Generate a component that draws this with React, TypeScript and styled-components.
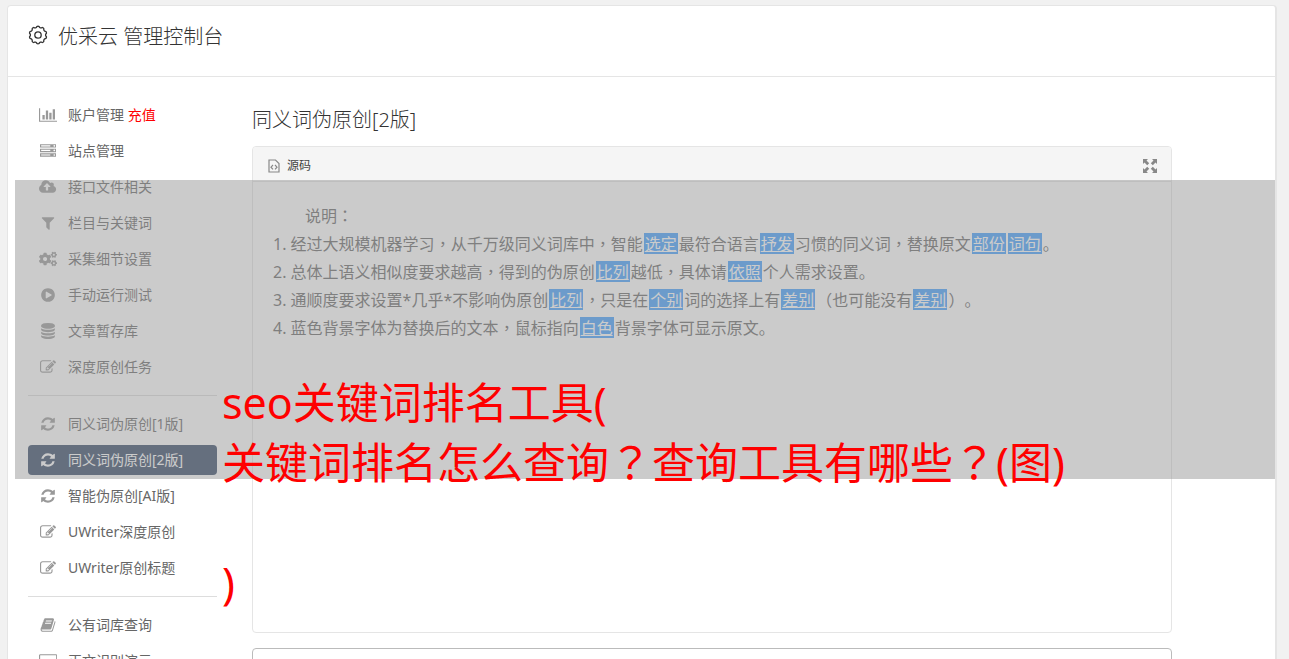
import React from "react";
import styled, { createGlobalStyle } from "styled-components";
import { FaCogs } from "react-icons/fa";

const GlobalStyle = createGlobalStyle`
  * { box-sizing: border-box; }
  html, body { margin: 0; background: #f1f1f1; }
  html { overflow: hidden; }
  body {
    font-family: "Noto Sans", "Noto Sans CJK SC", sans-serif;
    font-size: 14px;
    color: #333;
    text-spacing-trim: space-all;
  }
  h1, h2, p, ul, ol { margin: 0; padding: 0; font-weight: 400; }
  button { font: inherit; color: inherit; background: none; border: 0; padding: 0; }
`;

const Page = styled.div`
  position: relative;
  height: 100vh;
  overflow: hidden;
  padding: 5px 12px 0 7px;
`;

const Card = styled.div`
  min-height: 1000px;
  background: #fff;
  border: 1px solid #e5e5e5;
  border-right-width: 2px;
  border-radius: 4px;
`;

const Header = styled.header`
  display: flex;
  align-items: center;
  gap: 10px;
  height: 71px;
  padding: 0 20px 12px;
  border-bottom: 1px solid #e5e5e5;
`;

const SiteTitle = styled.h1`
  padding-top: 4px;
  font-size: 20px;
  font-weight: 300;
  line-height: 28px;
`;

const Body = styled.div`
  display: flex;
  gap: 35px;
  padding: 23px 20px;
`;

const Nav = styled.nav`
  flex: 0 0 189px;
`;

const NavList = styled.ul`
  display: flex;
  flex-direction: column;
  gap: 6px;
  list-style: none;
`;

const NavLink = styled.a<{ $active?: boolean }>`
  display: flex;
  align-items: center;
  height: 30px;
  padding: 0 10px;
  gap: 10px;
  border-radius: 4px;
  line-height: 20px;
  white-space: nowrap;
  text-decoration: none;
  color: ${(p) => (p.$active ? "#fff" : "#666")};
  background: ${(p) => (p.$active ? "#334765" : "transparent")};
  svg { color: ${(p) => (p.$active ? "#fff" : "#999")}; }
`;

const IconSlot = styled.span`
  display: flex;
  justify-content: center;
  flex: 0 0 20px;
`;

const Recharge = styled.span`
  color: #f00;
`;

const Divider = styled.li`
  height: 1px;
  margin: 7px 0;
  background: #ddd;
`;

const Main = styled.main`
  flex: 0 1 920px;
  min-width: 0;
`;

const PageTitle = styled.h2`
  font-size: 20px;
  font-weight: 300;
  line-height: 28px;
  padding-top: 6px;
  margin-bottom: 12px;
`;

const Editor = styled.section`
  min-height: 487px;
  border: 1px solid #e5e5e5;
  border-radius: 4px;
`;

const Toolbar = styled.div`
  display: flex;
  align-items: center;
  justify-content: space-between;
  height: 35px;
  padding: 3px 14px 0 15px;
  background: #f5f5f5;
  border-bottom: 1px solid #e5e5e5;
  border-radius: 3px 3px 0 0;
`;

const ToolButton = styled.button`
  display: flex;
  align-items: center;
  gap: 7px;
  font-size: 12px;
  line-height: 18px;
  color: #444;
`;

const Content = styled.div`
  padding: 20px;
  font-size: 16px;
  line-height: 28px;
  color: #666;
`;

const Intro = styled.p`
  padding-left: 32px;
`;

const Steps = styled.ol`
  list-style: none;
`;

const Step = styled.li`
  white-space: nowrap;
`;

const Replaced = styled.mark`
  display: inline-block;
  height: 21px;
  margin: 0 1px;
  padding: 0 1px;
  line-height: 23px;
  color: #fff;
  background: #409eff;
  text-decoration: underline;
`;

/* Full-width comma, colon and question mark sit in the middle of their cell. */
const Centred = styled.span`
  font-family: "Noto Sans CJK TC", sans-serif;
  line-height: 1;
`;

const ResultBox = styled.textarea`
  display: block;
  width: 100%;
  height: 200px;
  margin-top: 15px;
  border: 1px solid #bbb;
  border-radius: 4px;
  resize: none;
`;

const Banner = styled.aside`
  position: absolute;
  top: 180px;
  left: 15px;
  right: 14px;
  height: 299px;
  padding: 193px 0 0 207px;
  background: rgba(151, 151, 151, 0.5);
`;

const BannerText = styled.p`
  font-size: 43px;
  line-height: 60px;
  color: #f00;
  white-space: pre;
`;

const glyphs = {
  chart: [2048, "M640 896v512h-256v-512h256zm384-512v1024h-256v-1024h256zm1024 1152v128h-2048v-1536h128v1408h1920zm-640-896v768h-256v-768h256zm384-384v1152h-256v-1152h256z"],
  server: [1792, "M128 1408h1024v-128h-1024v128zm0-512h1024v-128h-1024v128zm1568 448q0-40-28-68t-68-28-68 28-28 68 28 68 68 28 68-28 28-68zm-1568-960h1024v-128h-1024v128zm1568 448q0-40-28-68t-68-28-68 28-28 68 28 68 68 28 68-28 28-68zm0-512q0-40-28-68t-68-28-68 28-28 68 28 68 68 28 68-28 28-68zm96 832v384h-1792v-384h1792zm0-512v384h-1792v-384h1792zm0-512v384h-1792v-384h1792z"],
  cloud: [1920, "M1280 864q0-14-9-23l-352-352q-9-9-23-9t-23 9l-351 351q-10 12-10 24 0 14 9 23t23 9h224v352q0 13 9.5 22.5t22.5 9.5h192q13 0 22.5-9.5t9.5-22.5v-352h224q13 0 22.5-9.5t9.5-22.5zm640 288q0 159-112.5 271.5t-271.5 112.5h-1088q-185 0-316.5-131.5t-131.5-316.5q0-130 70-240t188-165q-2-30-2-43 0-212 150-362t362-150q156 0 285.5 87t188.5 231q71-62 166-62 106 0 181 75t75 181q0 76-41 138 130 31 213.5 135.5t83.5 238.5z"],
  filter: [1792, "M1595 295q17 41-14 70l-493 493v742q0 42-39 59-13 5-25 5-27 0-45-19l-256-256q-19-19-19-45v-486l-493-493q-31-29-14-70 17-39 59-39h1280q42 0 59 39z"],
  play: [1792, "M896 128q209 0 385.5 103t279.5 279.5 103 385.5-103 385.5-279.5 279.5-385.5 103-385.5-103-279.5-279.5-103-385.5 103-385.5 279.5-279.5 385.5-103zm384 823q32-18 32-55t-32-55l-544-320q-31-19-64-1-32 19-32 56v640q0 37 32 56 16 8 32 8 17 0 32-9z"],
  database: [1792, "M896 768q237 0 443-43t325-127v170q0 69-103 128t-280 93.5-385 34.5-385-34.5-280-93.5-103-128v-170q119 84 325 127t443 43zm0 768q237 0 443-43t325-127v170q0 69-103 128t-280 93.5-385 34.5-385-34.5-280-93.5-103-128v-170q119 84 325 127t443 43zm0-384q237 0 443-43t325-127v170q0 69-103 128t-280 93.5-385 34.5-385-34.5-280-93.5-103-128v-170q119 84 325 127t443 43zm0-1152q208 0 385 34.5t280 93.5 103 128v128q0 69-103 128t-280 93.5-385 34.5-385-34.5-280-93.5-103-128v-128q0-69 103-128t280-93.5 385-34.5z"],
  edit: [1792, "M888 1184l116-116-152-152-116 116v56h96v96h56zm440-720q-16-16-33 1l-350 350q-17 17-1 33t33-1l350-350q17-17 1-33zm80 594v190q0 119-84.5 203.5t-203.5 84.5h-832q-119 0-203.5-84.5t-84.5-203.5v-832q0-119 84.5-203.5t203.5-84.5h832q63 0 117 25 15 7 18 23 3 17-9 29l-49 49q-14 14-32 8-23-6-45-6h-832q-66 0-113 47t-47 113v832q0 66 47 113t113 47h832q66 0 113-47t47-113v-126q0-13 9-22l64-64q15-15 35-7t20 29zm-96-738l288 288-672 672h-288v-288zm444 132l-92 92-288-288 92-92q28-28 68-28t68 28l152 152q28 28 28 68t-28 68z"],
  refresh: [1792, "M1639 1056q0 5-1 7-64 268-268 434.5t-478 166.5q-146 0-282.5-55t-243.5-157l-129 129q-19 19-45 19t-45-19-19-45v-448q0-26 19-45t45-19h448q26 0 45 19t19 45-19 45l-137 137q71 66 161 102t187 36q134 0 250-65t186-179q11-17 53-117 8-23 30-23h192q13 0 22.5 9.5t9.5 22.5zm25-800v448q0 26-19 45t-45 19h-448q-26 0-45-19t-19-45 19-45l138-138q-148-137-349-137-134 0-250 65t-186 179q-11 17-53 117-8 23-30 23h-199q-13 0-22.5-9.5t-9.5-22.5v-7q65-268 270-434.5t480-166.5q146 0 284 55.5t245 156.5l130-129q19-19 45-19t45 19 19 45z"],
  book: [1792, "M1703 478q40 57 18 129l-275 906q-19 64-76.5 107.5t-122.5 43.5h-923q-77 0-148.5-53.5t-99.5-131.5q-24-67-2-127 0-4 3-27t4-37q1-8-3-21.5t-3-19.5q2-11 8-21t16.5-23.5 16.5-23.5q23-38 45-91.5t30-91.5q3-10 .5-30t-.5-28q3-11 17-28t17-23q21-36 42-92t25-90q1-9-2.5-32t.5-28q4-13 22-30.5t22-22.5q19-26 42.5-84.5t27.5-96.5q1-8-3-25.5t-2-26.5q2-8 9-18t18-23 17-21q8-12 16.5-30.5t15-35 16-36 19.5-32 26.5-23.5 36-11.5 47.5 5.5l-1 3q38-9 51-9h761q74 0 114 56t18 130l-274 906q-36 119-71.5 153.5t-128.5 34.5h-869q-27 0-38 15-11 16-1 43 24 70 144 70h923q29 0 56-15.5t35-41.5l300-987q7-22 5-57 38 15 59 43zm-1064 2q-4 13 2 22.5t20 9.5h608q13 0 25.5-9.5t16.5-22.5l21-64q4-13-2-22.5t-20-9.5h-608q-13 0-25.5 9.5t-16.5 22.5zm-83 256q-4 13 2 22.5t20 9.5h608q13 0 25.5-9.5t16.5-22.5l21-64q4-13-2-22.5t-20-9.5h-608q-13 0-25.5 9.5t-16.5 22.5z"],
  screen: [2048, "M160 128h1728q66 0 113 47t47 113v1088q0 66-47 113t-113 47h-1728q-66 0-113-47t-47-113v-1088q0-66 47-113t113-47zm0 128q-32 0-32 32v1088q0 32 32 32h1728q32 0 32-32v-1088q0-32-32-32z"],
} as const;

type GlyphName = keyof typeof glyphs;

function Glyph({ name, size = 16 }: { name: GlyphName; size?: number }) {
  const [width, path] = glyphs[name];
  return (
    <svg width={(size * width) / 1792} height={size} viewBox={`0 0 ${width} 1792`} fill="currentColor" fillRule="evenodd" aria-hidden="true">
      <path d={path} />
    </svg>
  );
}

function GearIcon() {
  const rim = Array.from({ length: 96 }, (_, i) => {
    const a = (i / 96) * Math.PI * 2;
    const r = 8.2 + 0.6 * Math.tanh(2 * Math.cos(a * 10));
    return `${(10 + r * Math.sin(a)).toFixed(2)} ${(10 - r * Math.cos(a)).toFixed(2)}`;
  });
  return (
    <svg width="20" height="20" viewBox="0 0 20 20" fill="none" stroke="#333" strokeWidth="1.3" aria-hidden="true">
      <path d={`M${rim.join("L")}Z`} />
      <circle cx="10" cy="10" r="3.2" />
    </svg>
  );
}

function SourceIcon() {
  return (
    <svg width="12" height="14" viewBox="0 0 12 14" fill="none" stroke="#888" strokeWidth="1.2" aria-hidden="true">
      <path d="M1 1h6.500L11 4.500V13H1zM5 6L3 8.200 5 10.400M7 6l2 2.200L7 10.400" />
    </svg>
  );
}

function ExpandIcon() {
  return (
    <svg width="14" height="14" viewBox="0 0 14 14" fill="#888" aria-hidden="true">
      <path d="M0 0h5L3.500 1.500 6.200 4.200 4.200 6.200 1.500 3.500 0 5z" />
      <path d="M14 0v5l-1.500-1.500-2.700 2.700-2-2 2.700-2.700L9 0z" />
      <path d="M0 14V9l1.500 1.500 2.700-2.700 2 2-2.700 2.700L5 14z" />
      <path d="M14 14H9l1.500-1.500-2.700-2.700 2-2 2.700 2.700L14 9z" />
    </svg>
  );
}

type Item = { label: string; icon: GlyphName | "cogs"; extra?: string; active?: boolean };

const groups: Item[][] = [
  [
    { label: "账户管理", icon: "chart", extra: "充值" },
    { label: "站点管理", icon: "server" },
    { label: "接口文件相关", icon: "cloud" },
    { label: "栏目与关键词", icon: "filter" },
    { label: "采集细节设置", icon: "cogs" },
    { label: "手动运行测试", icon: "play" },
    { label: "文章暂存库", icon: "database" },
    { label: "深度原创任务", icon: "edit" },
  ],
  [
    { label: "同义词伪原创[1版]", icon: "refresh" },
    { label: "同义词伪原创[2版]", icon: "refresh", active: true },
    { label: "智能伪原创[AI版]", icon: "refresh" },
    { label: "UWriter深度原创", icon: "edit" },
    { label: "UWriter原创标题", icon: "edit" },
  ],
  [
    { label: "公有词库查询", icon: "book" },
    { label: "正文识别演示", icon: "screen" },
  ],
];

/* Words wrapped in braces are the ones the rewriter has replaced. */
const steps = [
  "经过大规模机器学习，从千万级同义词库中，智能{选定}最符合语言{抒发}习惯的同义词，替换原文{部份}{词句}。",
  "总体上语义相似度要求越高，得到的伪原创{比列}越低，具体请{依照}个人需求设置。",
  "通顺度要求设置*几乎*不影响伪原创{比列}，只是在{个别}词的选择上有{差别}（也可能没有{差别}）。",
  "蓝色背景字体为替换后的文本，鼠标指向{白色}背景字体可显示原文。",
];

function renderText(text: string) {
  return text
    .split(/(\{[^}]+\}|[，：？])/)
    .filter(Boolean)
    .map((part, i) => {
      if (part.startsWith("{")) return <Replaced key={i}>{part.slice(1, -1)}</Replaced>;
      if (/^[，：？]$/.test(part)) return <Centred key={i}>{part}</Centred>;
      return part;
    });
}

export default function App() {
  return (
    <>
      <GlobalStyle />
      <Page>
        <Card>
          <Header>
            <GearIcon />
            <SiteTitle>优采云 管理控制台</SiteTitle>
          </Header>
          <Body>
            <Nav>
              <NavList>
                {groups.map((group, g) => (
                  <React.Fragment key={g}>
                    {g > 0 && <Divider role="separator" />}
                    {group.map((item) => (
                      <li key={item.label}>
                        <NavLink href="#" $active={item.active}>
                          <IconSlot>
                            {item.icon === "cogs" ? <FaCogs size={18} /> : <Glyph name={item.icon} />}
                          </IconSlot>
                          <span>
                            {item.label} {item.extra && <Recharge>{item.extra}</Recharge>}
                          </span>
                        </NavLink>
                      </li>
                    ))}
                  </React.Fragment>
                ))}
              </NavList>
            </Nav>
            <Main>
              <PageTitle>同义词伪原创[2版]</PageTitle>
              <Editor>
                <Toolbar>
                  <ToolButton type="button">
                    <SourceIcon />
                    源码
                  </ToolButton>
                  <ToolButton type="button" aria-label="全屏">
                    <ExpandIcon />
                  </ToolButton>
                </Toolbar>
                <Content>
                  <Intro>{renderText("说明：")}</Intro>
                  <Steps>
                    {steps.map((step, i) => (
                      <Step key={i}>
                        {i + 1}. {renderText(step)}
                      </Step>
                    ))}
                  </Steps>
                </Content>
              </Editor>
              <ResultBox aria-label="结果" />
            </Main>
          </Body>
        </Card>
        <Banner>
          <BannerText>
            {renderText("seo关键词排名工具(\n关键词排名怎么查询？查询工具有哪些？(图)\n\n)")}
          </BannerText>
        </Banner>
      </Page>
    </>
  );
}
